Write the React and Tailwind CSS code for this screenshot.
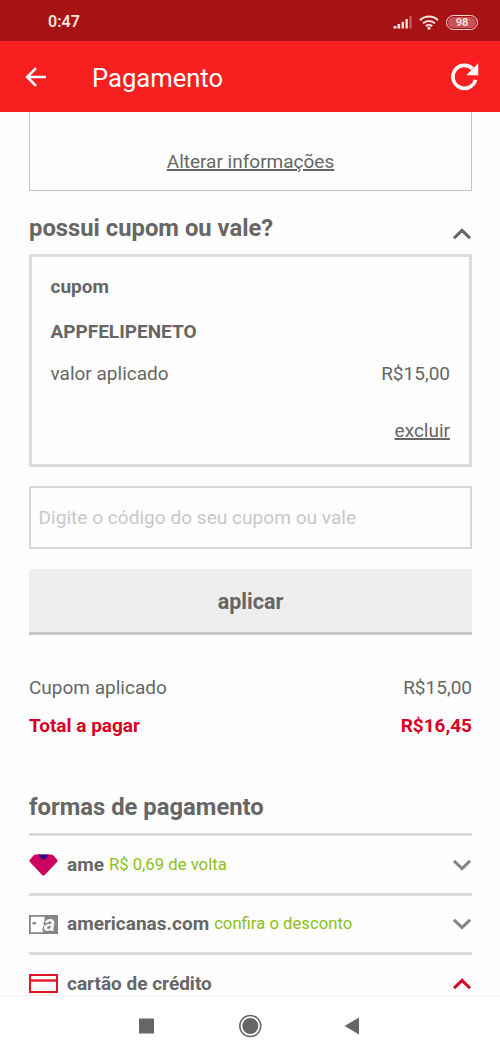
import clsx from 'clsx'

function Chevron({ up, className }) {
    return (
        <svg viewBox="0 0 18 12" className={clsx('w-[18px] h-3 flex-shrink-0', className)} fill="none" stroke="currentColor" strokeWidth="3">
            <path d={up ? 'M1 10.2 9 2.4l8 7.8' : 'M1 1.8l8 7.8 8-7.8'} />
        </svg>
    )
}

function StatusBar() {
    return (
        <div className="h-[41px] bg-[#a71314] flex items-center justify-between pl-12 pr-[22px] pt-[3px] text-[#fbe3df]">
            <span className="text-[16px] font-semibold leading-none">0:47</span>
            <div className="flex items-center">
                {/* Signal */}
                <svg viewBox="0 0 20 14" className="w-5 h-3.5" fill="currentColor">
                    <path d="M0.5 11h3v2.5h-3zM4.5 9h2.6v4.5H4.5zM8.6 6.8h2.4v6.7H8.6zM12.5 4h2.3v9.5h-2.3z" />
                    <path d="M16.5 1h2v12.5h-2z" opacity="0.4" />
                </svg>
                {/* Wi-Fi */}
                <svg viewBox="0 0 20 15" className="w-5 h-[15px] ml-[6px]" fill="none" stroke="currentColor" strokeWidth="2">
                    <path d="M1 5.2a13 13 0 0 1 18 0M4 8.4a8.6 8.6 0 0 1 12 0M6.8 11.2a4.8 4.8 0 0 1 6.4 0" />
                    <circle cx="10" cy="13.2" r="1.6" fill="currentColor" stroke="none" />
                </svg>
                {/* Battery */}
                <div className="ml-[7px] w-8 h-[15px] rounded-full border-[1.5px] border-[#fbd5d2] p-px">
                    <div className="w-full h-full rounded-full bg-[#c9535a] flex items-center justify-center text-[11px] font-bold leading-none">98</div>
                </div>
            </div>
        </div>
    )
}

function Header() {
    return (
        <header className="h-[71px] bg-[#f71f1f] flex items-center pl-[25px] pr-[21px] text-white">
            <svg viewBox="0 0 22 20" className="w-[22px] h-5" fill="none" stroke="currentColor" strokeWidth="2.6">
                <path d="M21 10H2.5M11 1.2 2.2 10l8.8 8.8" />
            </svg>
            <h1 className="ml-[45px] flex-1 text-[25.6px] leading-none pt-[5px]">Pagamento</h1>
            <svg viewBox="0 0 30 30" className="w-[29px] h-[29px]">
                <path d="M26.4 18.5A11.900 11.900 0 1 1 23.200 6.800" fill="none" stroke="currentColor" strokeWidth="3.8" />
                <path d="M29.2 1.2v12.4H16.8z" fill="currentColor" />
            </svg>
        </header>
    )
}

function AmeIcon() {
    return (
        <svg viewBox="0 0 29 22" className="w-[29px] h-[22px] mt-px">
            <path d="M6.500.5h16q1 0 1.7.8l4 4.4q.8 1.2-.2 2.3L15.8 21q-1.3 1.2-2.6 0L.9 8q-.9-1.1-.1-2.3l4-4.4Q5.500.5 6.500.5z" fill="#cd0360" />
            <path d="M9 .5h11l-3.5 4.300q-2 1.500-4 0z" fill="#320b88" />
        </svg>
    )
}

function StoreCardIcon() {
    return (
        <svg viewBox="0 0 29 19" className="w-[29px] h-[19px] mt-0.5 overflow-visible">
            <path d="M.9.9h27.2v17.2H.9z" fill="#fff" stroke="#858585" strokeWidth="1.8" />
            <path d="M15.500 1H28v17H14.500q-2.500-4 .5-7.500-1-3 .5-5z" fill="#858585" />
            <path d="M3.5 7H7v2.4H3.500z" fill="#858585" />
            <text x="14.8" y="15.6" fontSize="22" fontWeight="700" fontStyle="italic" fill="#f5f5f5" fontFamily="Roboto, sans-serif">a</text>
        </svg>
    )
}

function CreditCardIcon() {
    return (
        <svg viewBox="0 0 29 19" className="w-[29px] h-[19px]" fill="none" stroke="#e11428" strokeWidth="2">
            <path d="M1 1h27v17H1z" />
            <path d="M1 6.5h27" strokeWidth="2.4" />
        </svg>
    )
}

const METHODS = [
    { name: 'ame', note: 'R$ 0,69 de volta', icon: AmeIcon },
    { name: 'americanas.com', note: 'confira o desconto', icon: StoreCardIcon },
    { name: 'cartão de crédito', icon: CreditCardIcon, open: true },
]

function PaymentMethod({ name, note, icon: Icon, open }) {
    return (
        <div className="h-[59.5px] flex-shrink-0 border-t-[3px] border-[#dcdcdc] flex items-center">
            <Icon />
            <span className="ml-[9px] pt-px text-[19px] font-bold">{name}</span>
            {note && <span className="ml-[5px] pt-px text-[16.7px] text-[#8cc019]">{note}</span>}
            <Chevron up={open} className={clsx('ml-auto mr-px mt-px', open ? 'text-[#d9072b]' : 'text-[#858585]')} />
        </div>
    )
}

function NavBar() {
    return (
        <nav className="h-[61px] border-t border-[#f3f3f3] bg-white">
            <svg viewBox="0 0 500 60" className="w-full h-[60px]" fill="#666">
                <path d="M139 22.5h15v15h-15z" />
                <circle cx="250.3" cy="30" r="8" />
                <circle cx="250.3" cy="30" r="10.5" fill="none" stroke="#666" strokeWidth="1.5" />
                <path d="M344.5 30l14.5-8.500v17z" />
            </svg>
        </nav>
    )
}

export default function App() {
    return (
        <div className="w-[500px] h-[1056px] flex flex-col overflow-hidden bg-[#fefefe] text-[#666] font-['Roboto',sans-serif]">
            <StatusBar />
            <Header />

            <main className="flex-1 min-h-0 overflow-hidden pl-[29px] pr-7 flex flex-col text-[19px] leading-6">
                {/* Address card, scrolled under the header */}
                <div className="h-[79px] flex-shrink-0 border border-t-0 border-[#c4c4c4] flex items-end justify-center pb-4">
                    <a className="underline decoration-2 underline-offset-1">Alterar informações</a>
                </div>

                <div className="h-[63px] flex-shrink-0 flex items-center justify-between pt-[11px]">
                    <h2 className="text-[23.8px] font-bold">possui cupom ou vale?</h2>
                    <Chevron up className="mt-[11px] mr-px" />
                </div>

                {/* Applied coupon */}
                <div className="h-[213px] flex-shrink-0 border-[3px] border-[#dcdcdc] pl-[18.5px] pr-[19px] pt-[18px]">
                    <p className="font-bold">cupom</p>
                    <p className="font-bold mt-[21px]">APPFELIPENETO</p>
                    <div className="mt-[18px] flex justify-between">
                        <span>valor aplicado</span>
                        <span>R$15,00</span>
                    </div>
                    <p className="mt-[33px] text-right">
                        <a className="underline decoration-2 underline-offset-1">excluir</a>
                    </p>
                </div>

                <div className="mt-[19px] h-[63px] flex-shrink-0 border-2 border-[#d8d8d8] flex items-center px-[7.5px]">
                    <input className="w-full outline-none text-[19.1px] placeholder:text-[#c8c8c8]" placeholder="Digite o código do seu cupom ou vale" />
                </div>

                <button className="mt-5 h-[66px] flex-shrink-0 bg-[#eee] border-b-[3px] border-[#c8c8c8] text-[21.5px] font-bold pt-0.5">aplicar</button>

                {/* Totals */}
                <div className="mt-[41px] flex justify-between">
                    <span>Cupom aplicado</span>
                    <span>R$15,00</span>
                </div>
                <div className="mt-3.5 flex justify-between font-bold text-[#d9001f]">
                    <span>Total a pagar</span>
                    <span>R$16,45</span>
                </div>

                <h2 className="mt-[57px] mb-[14px] text-[23.8px] leading-6 font-bold">formas de pagamento</h2>
                {METHODS.map((m) => <PaymentMethod key={m.name} {...m} />)}
            </main>

            <NavBar />
        </div>
    )
}
